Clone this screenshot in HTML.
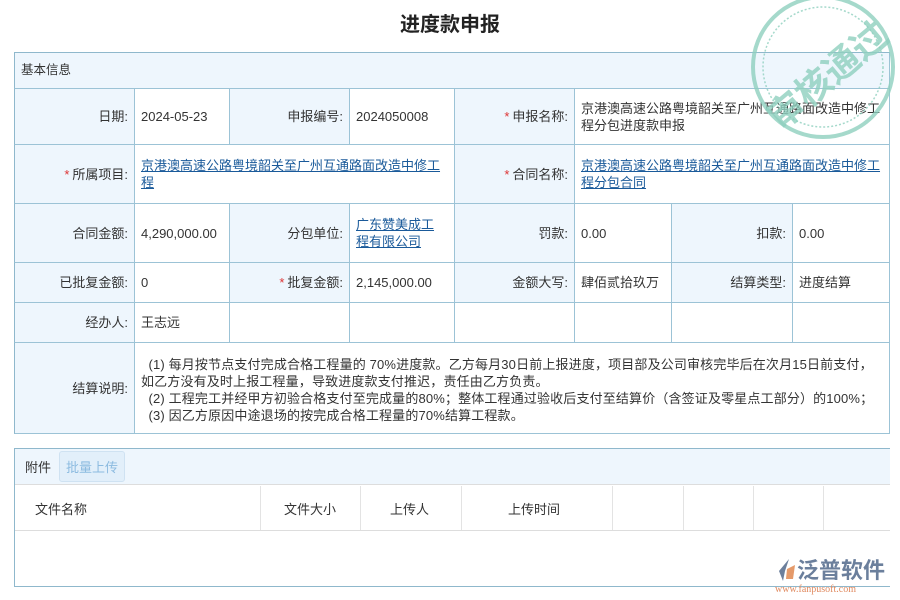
<!DOCTYPE html>
<html><head><meta charset="utf-8"><style>
body{margin:0;width:900px;height:600px;background:#fff;font-family:"Liberation Sans","Noto Sans CJK SC",sans-serif;font-size:13px;color:#333;position:relative;overflow:hidden}
.a{position:absolute;box-sizing:border-box}
.c{position:absolute;box-sizing:border-box;border-right:1px solid #9cc3d6;border-bottom:1px solid #9cc3d6;display:flex;align-items:center;padding:0 6px;line-height:17px}
.l{background:#eef6fd;justify-content:flex-end}
.s{color:#d33;margin-right:3px}
a{color:#1a5a9a;text-decoration:underline}
</style></head><body>
<div class="a" style="left:0;top:8px;width:900px;text-align:center;font-size:20px;font-weight:bold;color:#222">进度款申报</div>
<div class="c" style="left:14px;top:52px;width:876px;height:37px;background:#eef6fd;border-left:1px solid #8fb8cc;border-top:1px solid #8fb8cc;font-size:12.5px">基本信息</div>

<div class="c l" style="left:14px;top:89px;width:121px;height:56px;border-left:1px solid #8fb8cc">日期:</div>
<div class="c" style="left:135px;top:89px;width:95px;height:56px">2024-05-23</div>
<div class="c l" style="left:230px;top:89px;width:120px;height:56px">申报编号:</div>
<div class="c" style="left:350px;top:89px;width:105px;height:56px">2024050008</div>
<div class="c l" style="left:455px;top:89px;width:120px;height:56px"><span class="s">*</span>申报名称:</div>
<div class="c" style="left:575px;top:89px;width:315px;height:56px">京港澳高速公路粤境韶关至广州互通路面改造中修工程分包进度款申报</div>

<div class="c l" style="left:14px;top:145px;width:121px;height:59px;border-left:1px solid #8fb8cc"><span class="s">*</span>所属项目:</div>
<div class="c" style="left:135px;top:145px;width:320px;height:59px"><a>京港澳高速公路粤境韶关至广州互通路面改造中修工程</a></div>
<div class="c l" style="left:455px;top:145px;width:120px;height:59px"><span class="s">*</span>合同名称:</div>
<div class="c" style="left:575px;top:145px;width:315px;height:59px"><a>京港澳高速公路粤境韶关至广州互通路面改造中修工程分包合同</a></div>

<div class="c l" style="left:14px;top:204px;width:121px;height:59px;border-left:1px solid #8fb8cc">合同金额:</div>
<div class="c" style="left:135px;top:204px;width:95px;height:59px">4,290,000.00</div>
<div class="c l" style="left:230px;top:204px;width:120px;height:59px">分包单位:</div>
<div class="c" style="left:350px;top:204px;width:105px;height:59px;padding-right:14px"><a>广东赞美成工程有限公司</a></div>
<div class="c l" style="left:455px;top:204px;width:120px;height:59px">罚款:</div>
<div class="c" style="left:575px;top:204px;width:97px;height:59px">0.00</div>
<div class="c l" style="left:672px;top:204px;width:121px;height:59px">扣款:</div>
<div class="c" style="left:793px;top:204px;width:97px;height:59px">0.00</div>

<div class="c l" style="left:14px;top:263px;width:121px;height:40px;border-left:1px solid #8fb8cc">已批复金额:</div>
<div class="c" style="left:135px;top:263px;width:95px;height:40px">0</div>
<div class="c l" style="left:230px;top:263px;width:120px;height:40px"><span class="s">*</span>批复金额:</div>
<div class="c" style="left:350px;top:263px;width:105px;height:40px">2,145,000.00</div>
<div class="c l" style="left:455px;top:263px;width:120px;height:40px">金额大写:</div>
<div class="c" style="left:575px;top:263px;width:97px;height:40px">肆佰贰拾玖万</div>
<div class="c l" style="left:672px;top:263px;width:121px;height:40px">结算类型:</div>
<div class="c" style="left:793px;top:263px;width:97px;height:40px">进度结算</div>

<div class="c l" style="left:14px;top:303px;width:121px;height:40px;border-left:1px solid #8fb8cc">经办人:</div>
<div class="c" style="left:135px;top:303px;width:95px;height:40px">王志远</div>
<div class="c" style="left:230px;top:303px;width:120px;height:40px"></div>
<div class="c" style="left:350px;top:303px;width:105px;height:40px"></div>
<div class="c" style="left:455px;top:303px;width:120px;height:40px"></div>
<div class="c" style="left:575px;top:303px;width:97px;height:40px"></div>
<div class="c" style="left:672px;top:303px;width:121px;height:40px"></div>
<div class="c" style="left:793px;top:303px;width:97px;height:40px"></div>

<div class="c l" style="left:14px;top:343px;width:121px;height:91px;border-left:1px solid #8fb8cc">结算说明:</div>
<div class="c" style="left:135px;top:343px;width:755px;height:91px;font-size:13px;letter-spacing:0.15px;display:block;padding:13px 8px 0 6px">&nbsp;&nbsp;(1) 每月按节点支付完成合格工程量的 70%进度款。乙方每月30日前上报进度，项目部及公司审核完毕后在次月15日前支付，如乙方没有及时上报工程量，导致进度款支付推迟，责任由乙方负责。<br>&nbsp;&nbsp;(2) 工程完工并经甲方初验合格支付至完成量的80%；整体工程通过验收后支付至结算价（含签证及零星点工部分）的100%；<br>&nbsp;&nbsp;(3) 因乙方原因中途退场的按完成合格工程量的70%结算工程款。</div>

<div class="a" style="left:14px;top:448px;width:876px;height:139px;border:1px solid #8fb8cc;border-right:none"></div>
<div class="a" style="left:15px;top:449px;width:875px;height:36px;background:#eef6fd;border-bottom:1px solid #ddd;display:flex;align-items:center;padding-left:10px">附件<span style="margin-left:8px;background:#e2effa;border:1px solid #cfe2f2;border-radius:3px;color:#8cbbe0;padding:5px 6px">批量上传</span></div>
<div class="a" style="left:15px;top:485px;width:875px;height:46px;border-bottom:1px solid #ddd"></div>
<div class="a" style="left:35px;top:499px">文件名称</div>
<div class="a" style="left:284px;top:499px">文件大小</div>
<div class="a" style="left:390px;top:499px">上传人</div>
<div class="a" style="left:508px;top:499px">上传时间</div>
<div class="a" style="left:260px;top:486px;height:44px;border-left:1px solid #e3e3e3"></div>
<div class="a" style="left:360px;top:486px;height:44px;border-left:1px solid #e3e3e3"></div>
<div class="a" style="left:461px;top:486px;height:44px;border-left:1px solid #e3e3e3"></div>
<div class="a" style="left:612px;top:486px;height:44px;border-left:1px solid #e3e3e3"></div>
<div class="a" style="left:683px;top:486px;height:44px;border-left:1px solid #e3e3e3"></div>
<div class="a" style="left:753px;top:486px;height:44px;border-left:1px solid #e3e3e3"></div>
<div class="a" style="left:823px;top:486px;height:44px;border-left:1px solid #e3e3e3"></div>

<svg class="a" style="left:735px;top:-5px" width="165" height="155" viewBox="0 0 165 155">
<g fill="none" stroke="#8fd0bf" opacity="0.8"><circle cx="88" cy="72" r="70" stroke-width="4"/><circle cx="88" cy="72" r="60" stroke-width="1.5" stroke-dasharray="2 2"/></g>
<text x="88" y="95" text-anchor="middle" font-size="36" font-weight="bold" fill="#8fd0bf" opacity="0.8" transform="rotate(-40 88 75)" font-family="Noto Sans CJK SC">审核通过</text>
</svg>

<svg class="a" style="left:775px;top:557px" width="22" height="26"><path d="M14 2 L4 14 L8 24 L10 14 Z" fill="#6b7f9c"/><path d="M12 12 L20 8 L18 22 L11 22Z" fill="#e59a6a"/></svg>
<div class="a" style="left:797px;top:553px;font-size:22px;color:#6b7f9c;font-weight:bold;font-family:'Noto Sans CJK SC',sans-serif">泛普软件</div>
<div class="a" style="left:775px;top:584px;font-size:10px;color:#e08a60;font-family:'Liberation Serif',serif">www.fanpusoft.com</div>
</body></html>
